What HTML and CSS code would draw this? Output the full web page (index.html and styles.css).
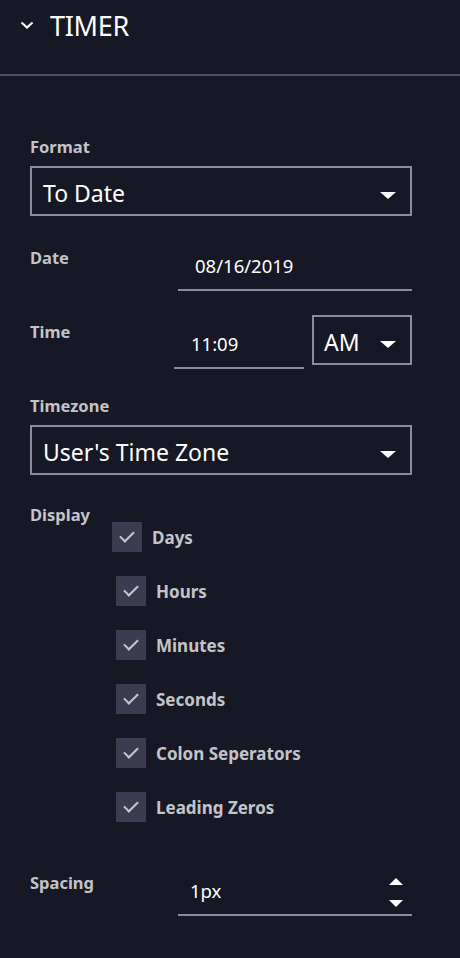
FILE: index.html
```html
<!DOCTYPE html>
<html lang="en">
  <head>
    <meta charset="UTF-8" />
    <meta name="viewport" content="width=device-width, initial-scale=1.0" />
    <title>Timer settings</title>
    <link rel="stylesheet" href="styles.css">
  </head>
  <body>
    <!-- パネル見出し -->
    <header class="panel-header">
      <svg class="chevron" width="14" height="8" viewBox="0 0 14 8">
        <path d="M1.5 1.5 L7 6.5 L12.5 1.5" fill="none" stroke="#fff" stroke-width="2.2" />
      </svg>
      <span class="panel-title">TIMER</span>
    </header>

    <section class="form">
      <!-- Format -->
      <div class="field">
        <div class="label">Format</div>
        <div class="select">
          <span class="select-value">To Date</span>
          <span class="caret"></span>
        </div>
      </div>

      <!-- Date -->
      <div class="row row-date">
        <div class="label">Date</div>
        <div class="underline-input date-input">08/16/2019</div>
      </div>

      <!-- Time -->
      <div class="row row-time">
        <div class="label">Time</div>
        <div class="underline-input time-input">11:09</div>
        <div class="select select-small">
          <span class="select-value">AM</span>
          <span class="caret"></span>
        </div>
      </div>

      <!-- Timezone -->
      <div class="field field-timezone">
        <div class="label">Timezone</div>
        <div class="select">
          <span class="select-value">User's Time Zone</span>
          <span class="caret"></span>
        </div>
      </div>

      <!-- Display -->
      <div class="display">
        <div class="label">Display</div>
        <ul class="checks">
          <li class="check check-first"><span class="box"></span>Days</li>
          <li class="check"><span class="box"></span>Hours</li>
          <li class="check"><span class="box"></span>Minutes</li>
          <li class="check"><span class="box"></span>Seconds</li>
          <li class="check"><span class="box"></span>Colon Seperators</li>
          <li class="check"><span class="box"></span>Leading Zeros</li>
        </ul>
      </div>

      <!-- Spacing -->
      <div class="row row-spacing">
        <div class="label">Spacing</div>
        <div class="underline-input spacing-input">
          <span>1px</span>
          <span class="spinner">
            <span class="spin-up"></span>
            <span class="spin-down"></span>
          </span>
        </div>
      </div>
    </section>
  </body>
</html>
```

FILE: styles.css
```css
body {
  margin: 0;
  background: #171825;
  font-family: "Noto Sans", "Open Sans", sans-serif;
  color: #fff;
}

/* 見出し */
.panel-header {
  display: flex;
  align-items: center;
  height: 52px;
  padding: 0 0 22px 20px;
  border-bottom: 2px solid #50525d;
}

.chevron {
  margin-right: 16px;
  margin-top: -3px;
}

.panel-title {
  font-size: 27px;
  margin-top: -2px;
  letter-spacing: -0.3px;
}

/* フォーム */
.form {
  padding: 60px 48px 40px 30px;
}

.label {
  font-size: 16.5px;
  font-weight: 700;
  color: #c4c4c8;
  line-height: 22px;
}

.field .label {
  margin-bottom: 8px;
}

.select {
  display: flex;
  align-items: center;
  justify-content: space-between;
  height: 46px;
  padding: 0 14px 0 11px;
  border: 2px solid #8a8c96;
  font-size: 23px;
}

.select-value {
  padding-top: 4px;
}

.caret {
  width: 0;
  height: 0;
  border-left: 8px solid transparent;
  border-right: 8px solid transparent;
  border-top: 7px solid #fff;
  margin-top: 9px;
}

.row {
  display: flex;
  align-items: flex-start;
}

.row-date .label,
.row-spacing .label {
  width: 148px;
}

.underline-input {
  border-bottom: 2px solid #8a8c96;
  font-size: 18.5px;
  line-height: 25px;
  color: #fff;
}

.row-date {
  margin-top: 31px;
}

.date-input {
  flex: 1;
  height: 36px;
  padding: 6px 0 0 17px;
}

.row-time {
  margin-top: 24px;
}

.row-time .label {
  width: 144px;
  padding-top: 6px;
}

.time-input {
  width: 113px;
  height: 36px;
  padding: 16px 0 0 17px;
}

.select-small {
  flex: 1;
  margin-left: 8px;
  padding: 0 14px 0 10px;
}

.field-timezone {
  margin-top: 26px;
}

/* チェックボックス */
.display {
  margin-top: 29px;
}

.checks {
  list-style: none;
  margin: -4px 0 0 0;
  padding: 0;
}

.check {
  display: flex;
  align-items: center;
  height: 30px;
  margin: 0 0 24px 86px;
  font-size: 17px;
  font-weight: 700;
  color: #c4c4c8;
}

.check:last-child {
  margin-bottom: 0;
}

.check-first {
  margin-left: 82px;
}

.box {
  position: relative;
  width: 30px;
  height: 30px;
  background: #3b3c52;
  margin-right: 10px;
  flex-shrink: 0;
}

/* チェックマーク */
.box::after {
  content: "";
  position: absolute;
  left: 11px;
  top: 6px;
  width: 6px;
  height: 12px;
  border-right: 2px solid #c8c8cc;
  border-bottom: 2px solid #c8c8cc;
  transform: rotate(45deg);
}

.row-spacing {
  margin-top: 50px;
}

.spacing-input {
  flex: 1;
  display: flex;
  justify-content: space-between;
  align-items: flex-start;
  height: 36px;
  padding: 6px 9px 0 12px;
}

.spinner {
  display: flex;
  flex-direction: column;
  gap: 15px;
}

.spin-up,
.spin-down {
  width: 0;
  height: 0;
  border-left: 7px solid transparent;
  border-right: 7px solid transparent;
}

.spin-up {
  border-bottom: 7px solid #fff;
}

.spin-down {
  border-top: 7px solid #fff;
}
```
